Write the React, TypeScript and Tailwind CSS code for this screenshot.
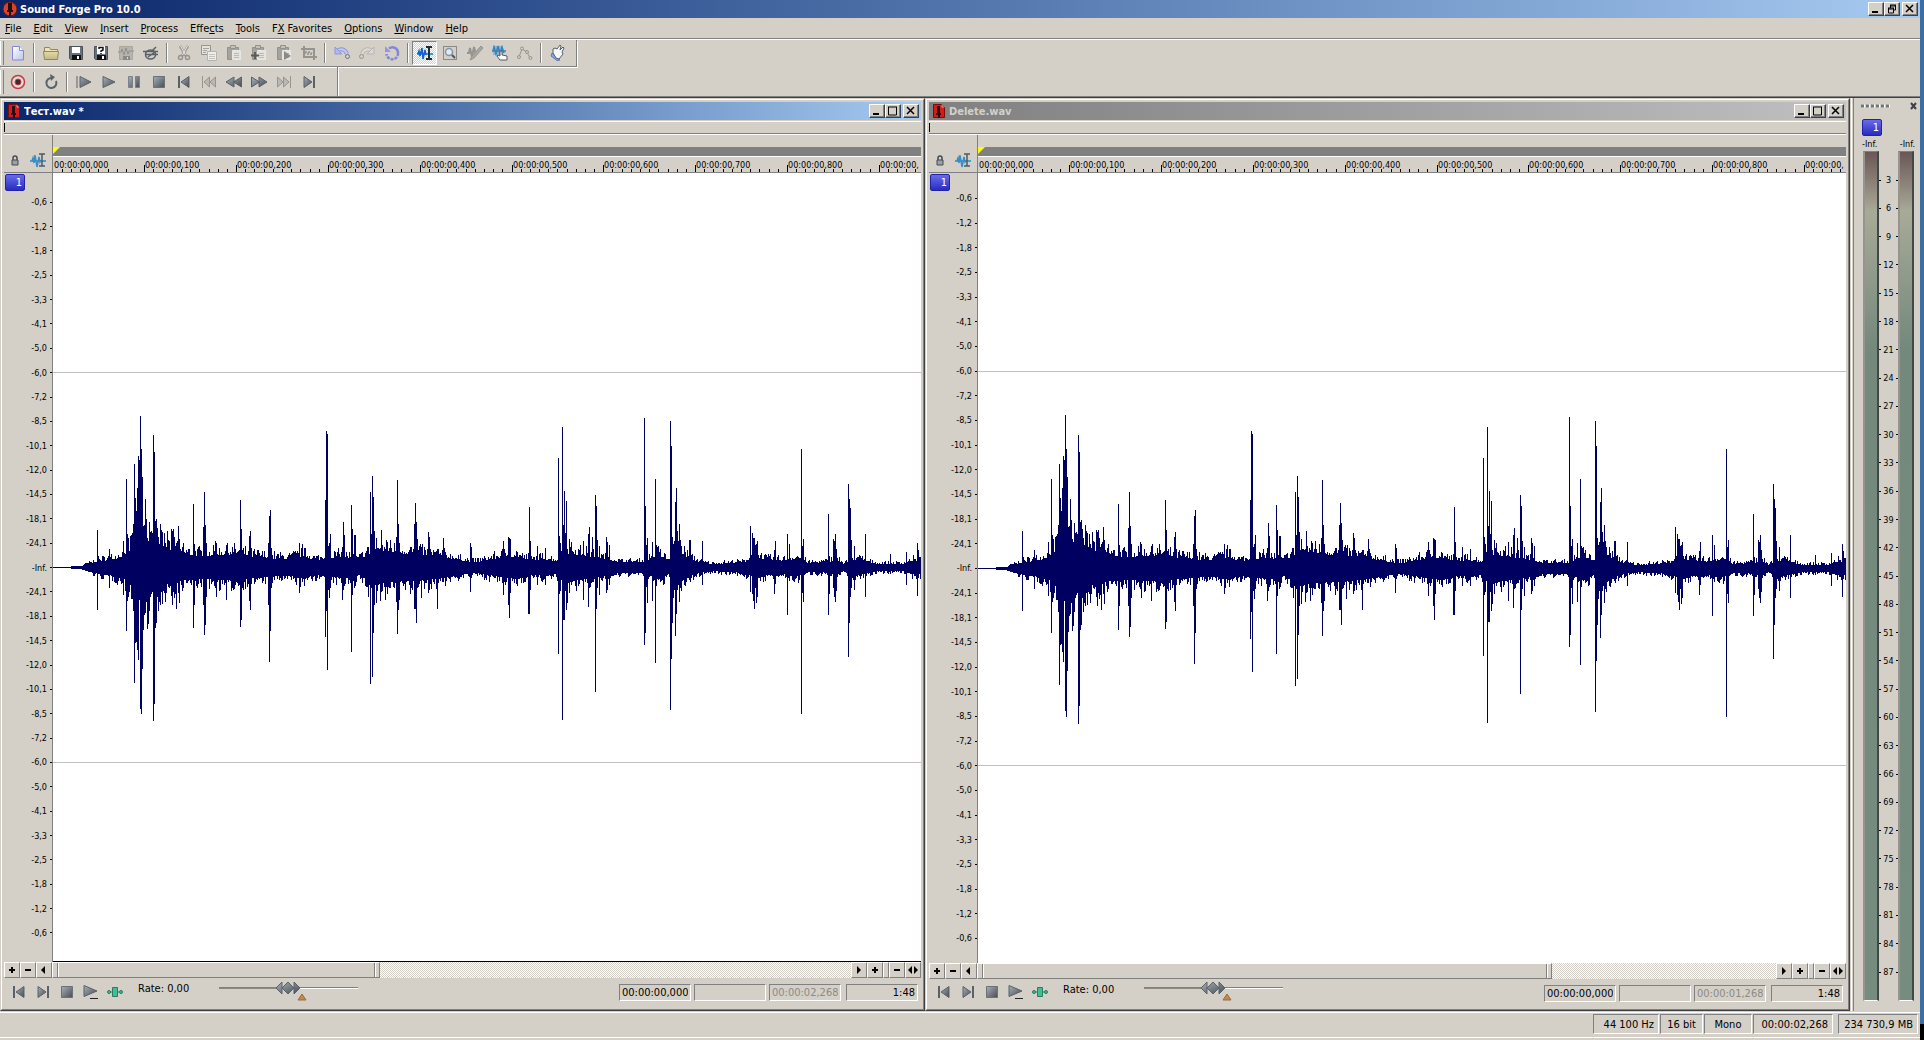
import type { ReactNode } from "react";
import clsx from "clsx";

const MENU = ["_File", "_Edit", "_View", "_Insert", "_Process", "Effe_cts", "_Tools", "F_X Favorites", "_Options", "_Window", "_Help"];

const DB = ["0,6", "1,2", "1,8", "2,5", "3,3", "4,1", "5,0", "6,0", "7,2", "8,5", "10,1", "12,0", "14,5", "18,1", "24,1"];
const SCALE = [...DB, "Inf.", ...[...DB].reverse()];

const WAVE_WIDTH = 868;

// quiet part of the signal: [x, level]
const ENVELOPE = [
  [0, 0], [16, 0], [18, 1], [27, 1], [35, 4], [44, 7], [60, 10], [70, 14], [78, 24], [95, 30], [105, 30], [113, 24],
  [130, 16], [150, 14], [160, 15], [180, 17], [200, 13], [220, 11], [235, 10], [250, 14], [262, 9], [280, 12],
  [290, 13], [305, 9], [320, 20], [335, 19], [355, 17], [375, 15], [390, 13], [405, 9], [420, 6], [435, 9],
  [450, 13], [463, 14], [475, 8], [490, 10], [503, 8], [516, 18], [540, 13], [555, 9], [570, 6], [590, 6],
  [605, 15], [615, 8], [625, 20], [637, 10], [650, 5], [660, 4], [690, 6], [703, 14], [712, 9], [730, 8],
  [745, 11], [755, 5], [775, 6], [783, 10], [790, 4], [803, 10], [815, 6], [825, 4], [850, 4], [860, 8], [868, 8],
];

// clicks: [x, up, down]
const PEAKS = [
  [44, 37, 42], [56, 18, 20], [70, 26, 27], [73, 88, 63], [74, 33, 33], [75, 29, 29], [79, 34, 31], [80, 43, 43],
  [81, 103, 115], [82, 69, 75], [83, 56, 74], [84, 79, 82], [85, 111, 92], [86, 107, 32], [87, 151, 141],
  [88, 118, 146], [89, 90, 101], [90, 41, 62], [91, 42, 47], [92, 68, 45], [93, 48, 34], [94, 29, 61], [95, 26, 56],
  [97, 35, 29], [99, 34, 24], [100, 132, 153], [101, 115, 136], [102, 46, 60], [103, 48, 55], [104, 39, 29],
  [105, 30, 43], [107, 43, 37], [109, 35, 36], [112, 24, 34], [114, 36, 16], [118, 38, 28], [119, 36, 37],
  [120, 38, 24], [123, 24, 41], [125, 41, 25], [126, 28, 35], [130, 24, 20], [140, 63, 60], [141, 23, 37],
  [150, 40, 37], [151, 75, 67], [152, 42, 57], [153, 24, 29], [162, 26, 20], [163, 24, 29], [173, 22, 32],
  [187, 67, 59], [188, 38, 52], [196, 31, 33], [197, 36, 42], [215, 24, 37], [216, 51, 94], [217, 57, 63],
  [218, 19, 20], [246, 24, 25], [249, 23, 14], [272, 67, 69], [273, 136, 43], [274, 133, 102], [275, 21, 22],
  [276, 24, 30], [277, 33, 20], [289, 20, 32], [290, 45, 22], [291, 32, 18], [298, 62, 84], [299, 38, 27],
  [301, 32, 20], [302, 32, 18], [315, 20, 29], [317, 75, 116], [318, 33, 20], [319, 91, 109], [320, 70, 65],
  [321, 36, 37], [323, 29, 35], [327, 19, 33], [328, 37, 24], [332, 18, 32], [334, 25, 26], [337, 27, 20],
  [343, 30, 34], [344, 87, 66], [345, 43, 42], [346, 24, 32], [357, 20, 26], [361, 43, 41], [362, 64, 41],
  [363, 45, 55], [364, 28, 20], [368, 20, 30], [375, 35, 25], [376, 30, 22], [384, 18, 41], [390, 29, 14],
  [417, 24, 24], [418, 20, 10], [450, 26, 27], [455, 30, 37], [456, 29, 50], [457, 28, 25], [475, 14, 46],
  [476, 60, 46], [477, 26, 22], [484, 21, 17], [492, 19, 17], [505, 109, 86], [506, 31, 26], [507, 24, 23],
  [509, 140, 152], [510, 42, 52], [511, 76, 52], [512, 34, 23], [513, 66, 42], [514, 18, 35], [516, 28, 25],
  [518, 25, 17], [530, 26, 32], [535, 33, 39], [536, 40, 20], [539, 30, 14], [542, 72, 124], [543, 61, 41],
  [544, 27, 20], [546, 21, 27], [553, 30, 25], [554, 25, 22], [556, 22, 17], [591, 149, 77], [592, 61, 65],
  [593, 22, 19], [594, 29, 35], [599, 25, 33], [602, 88, 95], [603, 22, 18], [617, 146, 142], [618, 121, 91],
  [619, 30, 55], [620, 23, 30], [621, 26, 22], [622, 65, 68], [623, 79, 46], [624, 36, 22], [626, 43, 34],
  [627, 27, 20], [628, 21, 23], [636, 27, 12], [637, 27, 14], [649, 26, 17], [697, 41, 24], [699, 34, 26],
  [700, 29, 33], [701, 29, 41], [702, 22, 20], [703, 23, 35], [704, 26, 29], [721, 17, 26], [722, 26, 16],
  [734, 33, 47], [736, 23, 13], [748, 118, 146], [749, 21, 25], [750, 28, 34], [775, 53, 47], [776, 11, 26],
  [780, 28, 20], [781, 26, 29], [782, 33, 34], [783, 18, 23], [795, 83, 89], [796, 68, 55], [797, 59, 29],
  [798, 27, 20], [801, 21, 22], [812, 33, 29], [837, 13, 6], [853, 15, 17], [864, 24, 28], [865, 17, 10],
];

function levelAt(x: number) {
  const i = Math.max(1, ENVELOPE.findIndex((p) => p[0] >= x));
  const [x0, a] = ENVELOPE[i - 1];
  const [x1, b] = ENVELOPE[i];
  return a + ((b - a) * (x - x0)) / (x1 - x0);
}

function buildWave() {
  const peaks = new Map(PEAKS.map(([x, up, down]) => [x, [up, down]]));
  let seed = 7;
  const noise = () => {
    seed = (seed * 16807) % 2147483647;
    const r = seed / 2147483647;
    return 0.75 + 0.75 * r * r;
  };
  let d = "";
  for (let x = 0; x < WAVE_WIDTH; x++) {
    const level = levelAt(x);
    const [up, down] = peaks.get(x) ?? [Math.round(level * noise()), Math.round(level * noise())];
    d += `M${x} ${-up}h1V${down + 1}h-1z`;
  }
  return d;
}

const WAVE = buildWave();

function Icon({ children, size = 16 }: { children: ReactNode; size?: number }) {
  return (
    <svg width={size} height={size} viewBox="0 0 16 16" fill="none" aria-hidden="true" className="shrink-0">
      {children}
    </svg>
  );
}

const faded = "#96948f";
const paleFill = "#e4e2dd";

function Clipboard({ children }: { children?: ReactNode }) {
  return (
    <>
      <path d="M1.500 2.500h11v12h-11z" fill="#a5a39e" stroke="#93918c" />
      <path d="M4.500.5h5v3h-5z" fill="#c3c1bc" stroke="#93918c" />
      <path d="M6.500 5.500h8v9h-8z" fill={paleFill} stroke="#e9e7e3" />
      <path d="M8 8.500h5M8 10.500h5M8 12.500h5" stroke="#bcbab5" />
      {children}
    </>
  );
}

function BlueWave() {
  return (
    <>
      <path d="M0 9h16" stroke="#3fa4d4" strokeWidth="2" />
      <path d="M2 9l1-3 1 5 1-8 2 12 2-10 1 5 1-2" stroke="#3b8cc6" strokeWidth="1.5" />
    </>
  );
}

const ICONS: Record<string, ReactNode> = {
  New: (
    <>
      <path d="M2.5 1.500h7l4 4v9.500h-11z" fill="url(#paper)" stroke="#8388d8" />
      <path d="M9.500 1.500v4h4" fill="#fff" stroke="#8388d8" />
    </>
  ),
  Open: (
    <>
      <path d="M1.500 6V2.500h5l1 2h7V7h-13z" fill="#ece6b4" stroke="#8f8856" />
      <path d="M.5 6.500h15l-1 8h-13z" fill="url(#folder)" stroke="#8f8856" />
    </>
  ),
  Save: (
    <>
      <path d="M1.500 1.500h13v13h-12l-1-1z" fill="#69727c" stroke="#48515a" />
      <path d="M4 2h8v6H4z" fill="#fff" />
      <path d="M4 10h9v5H4z" fill="#111" />
      <path d="M9 11h2v3H9z" fill="#fff" />
    </>
  ),
  "Save As": (
    <>
      <path d="M1.500 1.500h13v13h-12l-1-1z" fill="#69727c" stroke="#48515a" />
      <path d="M4 1h8v8H4z" fill="#fff" />
      <path d="M6 4V2.500h4V5L8 6v1M8 8v1" stroke="#111" strokeWidth="1.500" />
      <path d="M4 10h9v5H4z" fill="#111" />
      <path d="M9 11h2v3H9z" fill="#fff" />
    </>
  ),
  "Render As": (
    <>
      <path d="M1.500 1.500h13v13h-13z" fill="#b6b4af" stroke="#a9a7a2" />
      <path d="M0 7h3l1-3 2 6 2-7 2 6 1-3h5" stroke="#92908b" />
      <path d="M5 11h7v4H5z" fill="#8b8984" />
      <path d="M9 12h1v2H9z" fill="#ddd" />
    </>
  ),
  Properties: (
    <>
      <ellipse cx="7.500" cy="9.500" rx="5" ry="4.500" stroke="#596067" strokeWidth="1.500" />
      <path d="M0 6.500h15M2 9.500h13M8 7l5-5M5 12l7-5" stroke="#596067" strokeWidth="1.500" />
    </>
  ),
  Cut: (
    <>
      <path d="M4 1l6 10M12 1L6 11" stroke="#96948f" strokeWidth="2.500" />
      <path d="M4.500 1l5 9M11.500 1l-5 9" stroke="#eceae6" />
      <circle cx="4.500" cy="12.500" r="2" stroke={faded} strokeWidth="1.500" />
      <circle cx="11.500" cy="12.500" r="2" stroke={faded} strokeWidth="1.500" />
    </>
  ),
  Copy: (
    <>
      <path d="M.5.5h9v9h-9z" fill={paleFill} stroke={faded} />
      <path d="M2 3.500h6M2 5.500h4M2 7.500h3" stroke="#a5a39e" />
      <path d="M6.500 6.500h9v9h-9z" fill="#efede9" stroke="#b5b3ae" />
      <path d="M8 9.500h6M8 11.500h6M8 13.500h6" stroke="#c4c2bd" />
    </>
  ),
  Paste: <Clipboard />,
  "Paste Mix": (
    <Clipboard>
      <path d="M4 7v7M0 10.500h8" stroke="#5d5b57" strokeWidth="2" />
    </Clipboard>
  ),
  "Paste to New": (
    <Clipboard>
      <path d="M8 6l7 5-7 4z" fill="#8c8a85" />
    </Clipboard>
  ),
  "Trim/Crop": (
    <>
      <path d="M3 1v11h13M0 4h13v11" stroke="#96948f" strokeWidth="2" />
      <path d="M4 9l1-3 2 4 1-4 2 4 1-3" stroke={faded} />
    </>
  ),
  Undo: (
    <>
      <path d="M3 6c4-3 8-2 10 3" stroke="#8f97d6" strokeWidth="4" />
      <path d="M3 6c4-3 8-2 10 3" stroke="#c3c8f0" strokeWidth="2" />
      <path d="M1 2v7h7z" fill="#b3b9ec" stroke="#8f97d6" />
      <circle cx="13.500" cy="11.500" r="2" fill="#d4d0c8" stroke="#70767c" />
    </>
  ),
  Redo: (
    <>
      <path d="M13 6C9 3 5 4 3 9" stroke="#b7b5b0" strokeWidth="4" />
      <path d="M13 6C9 3 5 4 3 9" stroke="#dedcd7" strokeWidth="2" />
      <path d="M15 2v7H8z" fill="#dcdad5" stroke="#b7b5b0" />
      <circle cx="2.500" cy="11.500" r="2" stroke={faded} />
    </>
  ),
  Repeat: (
    <>
      <path d="M5 3.500A5.500 5.500 0 0 1 14 8" stroke="#8188d6" strokeWidth="2.500" />
      <path d="M14 8A5.500 5.500 0 1 1 2.500 9" stroke="#8188d6" strokeWidth="2.500" strokeDasharray="3 1" />
      <path d="M1 1v6h6z" fill="#9299e0" />
    </>
  ),
  "Edit Tool": (
    <>
      <path d="M0 9h16" stroke="#28a0dc" strokeWidth="2" />
      <path d="M1 9l1-3 1 5 2-8 1 11 2-9 1 5" stroke="#1460c8" strokeWidth="1.500" />
      <path d="M9 2h6M12 2v12M9 14h6" stroke="#222b36" strokeWidth="2" />
    </>
  ),
  "Magnify Tool": (
    <>
      <path d="M1.500 1.500h13v13h-13z" stroke="#444" strokeDasharray="1 1" />
      <circle cx="7" cy="7" r="3.500" fill="#dcecfa" stroke="#8a93a3" strokeWidth="1.500" />
      <path d="M10 10l3 3" stroke="#4d5560" strokeWidth="2" />
    </>
  ),
  "Pencil Tool": (
    <>
      <path d="M0 8h2l1-5 2 9 2-10 2 8" stroke={faded} strokeWidth="2" />
      <path d="M14 1L5 11l-2 4 4-2 9-10z" fill="#a9a7a2" stroke="#96948f" />
    </>
  ),
  "Event Tool": (
    <>
      <path d="M1 1h10v9H1z" fill="#8fb4d2" />
      <path d="M0 6h14M1 6l1-4 2 7 2-8 2 8 2-7 2 6" stroke="#3485bd" strokeWidth="1.500" />
      <path d="M8 15l-3-4 1-1 2 1V6h2v4l5 1v4z" fill="#fff" stroke="#565b62" />
    </>
  ),
  "Envelope Tool": (
    <>
      <path d="M2 12L5 4l5 3 3 6" stroke={faded} />
      <circle cx="2" cy="12" r="1.500" fill="#d4d0c8" stroke={faded} />
      <circle cx="5" cy="3.500" r="1.500" fill="#d4d0c8" stroke={faded} />
      <circle cx="10" cy="7" r="1.500" fill="#d4d0c8" stroke={faded} />
      <circle cx="13.500" cy="13" r="1.500" fill="#d4d0c8" stroke={faded} />
    </>
  ),
  "What's This": (
    <>
      <path d="M2 8l8 7-3 .5L1 11z" fill="#87a7df" stroke="#5d79b4" />
      <path d="M3 8V4l2-1 2 1 3-4 1 1-1 4 3-3 1 1-2 4 1 2-4 5-3-1z" fill="#f4f6fa" stroke="#555f6e" />
    </>
  ),
  Record: (
    <>
      <circle cx="8" cy="8" r="6.500" fill="#e9dcd8" stroke="#c43c44" strokeWidth="1.500" />
      <circle cx="8" cy="8" r="3" fill="#3d2a30" stroke="#c43c44" />
    </>
  ),
  "Loop Playback": (
    <>
      <path d="M9 4A5 5 0 1 0 13 7" stroke="#5c6269" strokeWidth="2" />
      <path d="M7 0l5 3-4 4z" fill="#5c6269" />
    </>
  ),
  "Play All": <path d="M1 2v12M4 2.500v11l11-5.500z" fill="url(#steel)" stroke="#5a6169" />,
  Play: <path d="M2 2.500v11l12-5.500z" fill="url(#steel)" stroke="#5a6169" />,
  Pause: <path d="M2.500 2.500h4v11h-4zM9.500 2.500h4v11h-4z" fill="url(#steel)" stroke="#7a8189" />,
  Stop: <path d="M2.500 2.500h11v11h-11z" fill="url(#steel)" stroke="#6a7179" />,
  "Go to Start": (
    <>
      <path d="M3 2v12" stroke="#5a6169" strokeWidth="2" />
      <path d="M13 2.500v11L5 8z" fill="url(#steel)" stroke="#5a6169" />
    </>
  ),
  Previous: <path d="M1.500 2v12M8.500 3v10L3 8zM14.500 3v10L9 8z" fill="#bab8b3" stroke={faded} />,
  Rewind: <path d="M8 3v10L0 8zM15.500 3v10l-8-5z" fill="url(#steel)" stroke="#5a6169" />,
  Forward: <path d="M8 3v10l8-5zM.5 3v10l8-5z" fill="url(#steel)" stroke="#5a6169" />,
  Next: <path d="M14.500 2v12M7.500 3v10L13 8zM1.500 3v10L7 8z" fill="#bab8b3" stroke={faded} />,
  "Go to End": (
    <>
      <path d="M13 2v12" stroke="#5a6169" strokeWidth="2" />
      <path d="M3 2.500v11L11 8z" fill="url(#steel)" stroke="#5a6169" />
    </>
  ),
  "Play Normal": (
    <>
      <path d="M1 1.500v11L14 7z" fill="url(#steel)" stroke="#5a6169" />
      <path d="M7 14.500h8" stroke="#222" />
    </>
  ),
  Scrub: (
    <>
      <path d="M2 8h12" stroke="#2c7a62" />
      <circle cx="2" cy="8" r="1.500" fill="#3fbf93" stroke="#2c7a62" />
      <circle cx="14" cy="8" r="1.500" fill="#3fbf93" stroke="#2c7a62" />
      <path d="M5.500 3.500h5v9h-5z" fill="#3fbf93" stroke="#2c7a62" />
    </>
  ),
};

const STANDARD = [
  ["New"],
  ["Open", "Save", "Save As", "Render As", "Properties"],
  ["Cut", "Copy", "Paste", "Paste Mix", "Paste to New", "Trim/Crop"],
  ["Undo", "Redo", "Repeat"],
  ["Edit Tool", "Magnify Tool", "Pencil Tool", "Event Tool", "Envelope Tool"],
  ["What's This"],
];

const TRANSPORT = [
  ["Record"],
  ["Loop Playback"],
  ["Play All", "Play", "Pause", "Stop", "Go to Start", "Previous", "Rewind", "Forward", "Next", "Go to End"],
];

function Toolbar({ groups, label, active }: { groups: string[][]; label: string; active?: string }) {
  return (
    <div role="toolbar" aria-label={label} className="flex h-full items-center pr-1">
      <div className="mr-px h-6 w-1 border-r border-r-[#808080] border-l border-l-white" />
      {groups.map((group, i) => (
        <div key={group[0]} className="flex items-center">
          {i > 0 && (
            <div className="flex w-2 justify-center">
              <div className="h-5 w-[2px] border-r border-r-white bg-[#808080]" />
            </div>
          )}
          {group.map((name) => (
            <button
              key={name}
              type="button"
              aria-label={name}
              className={clsx(
                "flex h-6 w-[25px] items-center justify-center",
                name === active &&
                  "border border-t-[#808080] border-r-white border-b-white border-l-[#808080] bg-[conic-gradient(#fff_25%,#d4d0c8_0_50%,#fff_0_75%,#d4d0c8_0)] bg-[length:2px_2px]",
              )}
            >
              <Icon>{ICONS[name]}</Icon>
            </button>
          ))}
        </div>
      ))}
    </div>
  );
}

function CaptionButtons({ restore }: { restore?: boolean }) {
  const cls =
    "flex h-[14px] w-4 items-center justify-center border border-t-white border-r-[#404040] border-b-[#404040] border-l-white bg-[#d4d0c8] shadow-[inset_-1px_-1px_0_#808080]";
  return (
    <div className="mr-[2px] flex items-center">
      <button type="button" aria-label="Minimize" className={cls}>
        <svg width="10" height="10" aria-hidden="true">
          <path d="M1 7h6v2H1z" />
        </svg>
      </button>
      <button type="button" aria-label={restore ? "Restore" : "Maximize"} className={cls}>
        <svg width="10" height="10" fill="none" stroke="#000" aria-hidden="true">
          {restore ? (
            <path d="M3 1h6M3.500 1v3M3 2h6M8.500 1v5H7M1 4h6M1.500 4v5h5V4M1 5h6" />
          ) : (
            <path d="M.5 1v8h8V1M0 1h9" strokeWidth="1" />
          )}
        </svg>
      </button>
      <button type="button" aria-label="Close" className={clsx(cls, "ml-[2px]")}>
        <svg width="10" height="10" stroke="#000" strokeWidth="1.500" aria-hidden="true">
          <path d="M1 1l7 7M8 1L1 8" />
        </svg>
      </button>
    </div>
  );
}

function ChannelButton({ className }: { className?: string }) {
  return (
    <button
      type="button"
      aria-label="Channel 1"
      className={clsx(
        "h-[17px] w-5 shrink-0 rounded-[2px] border border-[#2222a8] bg-linear-to-b from-[#6a6ae8] to-[#2a2ac0] pr-[2px] text-right text-[11px] leading-[15px] text-white",
        className,
      )}
    >
      1
    </button>
  );
}

function Ruler() {
  const ticks = Array.from({ length: 94 }, (_, i) => i + 1);
  return (
    <svg className="block h-4 w-full" aria-label="Time ruler">
      <path d="M0 15.500h3000" stroke="#808080" />
      {ticks.map((i) => (
        <rect key={i} x={Math.floor(i * 9.18)} y={i % 10 ? 12 : 8} width="1" height={i % 10 ? 3 : 7} />
      ))}
      {Array.from({ length: 10 }, (_, i) => (
        <text key={i} x={Math.floor(i * 91.8) + 1} y="11" fontSize="9">
          {i < 9 ? `00:00:00,${i}00` : "00:00:00,"}
        </text>
      ))}
    </svg>
  );
}

function ScrollButton({ label, d }: { label: string; d: string }) {
  return (
    <button
      type="button"
      aria-label={label}
      className="flex h-4 w-4 shrink-0 items-center justify-center border border-t-white border-r-[#808080] border-b-[#808080] border-l-white"
    >
      <svg width="10" height="10" aria-hidden="true">
        <path d={d} />
      </svg>
    </button>
  );
}

const PLUS = "M4 2h2v2h2v2H6v2H4V6H2V4h2z";
const MINUS = "M2 4h6v2H2z";

function Field({ label, value, dim, right }: { label: string; value: string; dim?: boolean; right?: boolean }) {
  return (
    <input
      readOnly
      aria-label={label}
      value={value}
      className={clsx(
        "h-[17px] w-[72px] border border-t-[#808080] border-r-white border-b-white border-l-[#808080] bg-transparent px-[2px] text-[11px] outline-none",
        dim && "text-[#8c8984]",
        right && "text-right",
      )}
    />
  );
}

type SoundWindowProps = {
  title: string;
  active?: boolean;
  length: string;
  half: number;
  gain: number;
};

function SoundWindow({ title, active, length, half, gain }: SoundWindowProps) {
  return (
    <section
      aria-label={title}
      className="flex min-w-0 flex-col border border-t-[#d4d0c8] border-r-[#404040] border-b-[#404040] border-l-[#d4d0c8]"
    >
      <div className="flex min-h-0 flex-1 flex-col border border-t-white border-r-[#808080] border-b-[#808080] border-l-white p-[2px]">
        <header
          className={clsx(
            "flex h-[18px] shrink-0 items-center bg-linear-to-r font-bold",
            active ? "from-[#0a246a] to-[#a6caf0] text-white" : "from-[#808080] to-[#c0c0c0] text-[#d4d0c8]",
          )}
        >
          <svg width="16" height="16" className="mx-[2px]" aria-hidden="true">
            <path d="M2.500 1.500h8l3 3v10h-11z" fill="#d21c1c" stroke="#7d0b0b" />
            <path d="M10.500 1.500v3h3" fill="#f08a80" />
            <path d="M6 3h3v7H6zM5 10h5v2H5zM7 12h2v3H7z" fill="#2a0e0e" />
          </svg>
          <h2 className="flex-1 truncate">{title}</h2>
          <CaptionButtons />
        </header>

        <div className="mt-px flex h-[13px] shrink-0 items-center border-t border-b border-t-white border-b-[#808080]">
          <div className="h-[9px] w-px bg-black" />
        </div>

        <div className="flex h-[39px] shrink-0 border-t border-white">
          <div className="flex w-[49px] shrink-0 items-end border-r border-b border-[#808080] pb-1 pl-[5px]">
            <svg width="12" height="14" fill="none" aria-label="Lock loop">
              <path d="M4 6V4a2 2 0 0 1 4 0v2" stroke="#444b52" strokeWidth="1.500" />
              <path d="M3 6h6v5H3z" fill="#9aa1a8" stroke="#444b52" />
            </svg>
            <div className="ml-[9px]">
              <Icon>
                <BlueWave />
                <path d="M9 2h6M12 2v12M9 14h6" stroke="#4d5a66" strokeWidth="1.500" />
              </Icon>
            </div>
          </div>
          <div className="flex min-w-0 flex-1 flex-col">
            <div className="h-3" />
            <div className="h-[9px] bg-[#808080]">
              <svg width="7" height="7" className="block" aria-hidden="true">
                <path d="M0 0h7L0 7z" fill="#ff0" />
              </svg>
            </div>
            <div className="h-px bg-white" />
            <Ruler />
          </div>
        </div>

        <div className="flex min-h-0 flex-1">
          <div className="flex w-[49px] shrink-0 border-r border-[#808080]">
            <ChannelButton className="mt-px ml-px" />
            <div className={clsx("flex flex-1 flex-col text-[9px] leading-3", active ? "py-[17px]" : "pt-[13px] pb-3")}>
              {SCALE.map((db, i) => (
                <div key={i} className="flex flex-1 items-center justify-end gap-[3px]">
                  <span>-{db}</span>
                  <i className="h-px w-[2px] bg-black" />
                </div>
              ))}
            </div>
          </div>
          <div className={clsx("min-w-0 flex-1 overflow-hidden bg-white", active && "border-b border-black")}>
            <svg
              className="block h-full w-full"
              viewBox={`0 ${-half} ${WAVE_WIDTH} ${half * 2}`}
              preserveAspectRatio="none"
              shapeRendering="crispEdges"
              role="img"
              aria-label={`Waveform of ${title}`}
            >
              <path d={`M0 ${-gain}h${WAVE_WIDTH}v1H0zM0 ${gain}h${WAVE_WIDTH}v1H0z`} fill="#c0c0c0" />
              <path d={WAVE} fill="#000060" transform={`scale(1 ${gain / 195})`} />
            </svg>
          </div>
        </div>

        <div className="flex h-4 shrink-0">
          <ScrollButton label="Zoom in amplitude" d={PLUS} />
          <ScrollButton label="Zoom out amplitude" d={MINUS} />
          <ScrollButton label="Scroll left" d="M6 1v8L2 5z" />
          <div className="min-w-0 flex-1 bg-[conic-gradient(#fff_25%,#d4d0c8_0_50%,#fff_0_75%,#d4d0c8_0)] bg-[length:2px_2px]">
            <div
              className={clsx(
                "flex h-full border border-t-white border-r-[#808080] border-b-[#808080] border-l-white bg-[#d4d0c8] px-1",
                active ? "w-[41%]" : "w-[72%]",
              )}
            >
              <div className="flex-1 border-x border-[#808080] shadow-[inset_1px_0_0_#fff,1px_0_0_#fff]" />
            </div>
          </div>
          <ScrollButton label="Scroll right" d="M3 1v8l4-4z" />
          <ScrollButton label="Zoom in time" d={PLUS} />
          <div className="w-[6px] border border-t-white border-r-[#808080] border-b-[#808080] border-l-white" />
          <ScrollButton label="Zoom out time" d={MINUS} />
          <ScrollButton label="Zoom selection" d="M4 1v8L0 5zM6 1v8l4-4z" />
        </div>

        <div className={clsx("flex shrink-0 items-center", active ? "h-[29px]" : "h-7")}>
          <div className="flex pb-[2px] pl-[3px]">
            {["Go to Start", "Go to End", "Stop", "Play Normal", "Scrub"].map((name) => (
              <button key={name} type="button" aria-label={name} className="flex h-6 w-6 items-center justify-center">
                <Icon>{ICONS[name]}</Icon>
              </button>
            ))}
          </div>
          <label className="flex items-center pb-1">
            <span className="w-[92px] pb-1 pl-[11px] whitespace-nowrap">Rate: 0,00</span>
            <span className="relative block h-5 w-[140px]">
              <svg width="140" height="20" className="block" aria-hidden="true">
                <path d="M0 6h139v1H0z" fill="#808080" />
                <path d="M0 7h60v1H0z" fill="#8d8b80" />
                <path d="M60 7h79v1H60z" fill="#fff" />
                <path d="M63 1v12l-6-6zM69 1l6 6-6 6-6-6zM75 1v12l6-6z" fill="url(#steel)" stroke="#5a6169" />
                <path d="M83 13l4 6h-8z" fill="#c08a4c" stroke="#9c6a3a" />
              </svg>
              <input
                type="range"
                aria-label="Play rate"
                defaultValue={50}
                className="absolute inset-0 m-0 h-full w-full opacity-0"
              />
            </span>
          </label>
          <div className="ml-auto flex gap-[3px] pr-[3px]">
            <Field label="Selection start" value="00:00:00,000" />
            <Field label="Selection end" value="" />
            <Field label="Selection length" value={length} dim />
            <div className="pl-[2px]">
              <Field label="Zoom ratio" value="1:48" right />
            </div>
          </div>
        </div>
      </div>
    </section>
  );
}

function MeterBar() {
  return (
    <div className="w-4 border-t border-l-2 border-t-[#808080] border-r-2 border-b border-l-[#959490] border-r-[#404848] border-b-white bg-[linear-gradient(#6b5656_0%,#a8aa97_7%,#74897c_23%,#758c7f_100%)]" />
  );
}

function ChannelMeters() {
  const marks = Array.from({ length: 29 }, (_, i) => (i + 1) * 3);
  return (
    <aside aria-label="Channel meters" className="flex w-[70px] shrink-0 border-l border-[#d4d0c8]">
      <div className="w-[3px] border-r border-l border-r-[#808080] border-l-white" />
      <div className="flex flex-1 flex-col pb-[10px] text-[9px]">
        <div className="flex h-[21px] shrink-0 items-center justify-between pr-[2px] pb-[6px] pl-[7px]">
          <svg width="29" height="4" aria-hidden="true">
            <path d="M1 2h29" stroke="#fff" strokeWidth="3" strokeDasharray="3 2" />
            <path d="M0 2h29" stroke="#70757c" strokeWidth="3" strokeDasharray="3 2" />
          </svg>
          <button type="button" aria-label="Close meters" className="h-2 w-2">
            <svg width="8" height="8" stroke="#3c3f44" strokeWidth="2" className="block" aria-hidden="true">
              <path d="M1 1l5 6M6 1L1 7" />
            </svg>
          </button>
        </div>
        <ChannelButton className="ml-2" />
        <div className="flex h-[15px] shrink-0 items-center justify-between pt-[2px] pr-[5px] pl-2">
          <span>-Inf.</span>
          <span>-Inf.</span>
        </div>
        <div className="flex min-h-0 flex-1 pl-[9px]">
          <MeterBar />
          <div className="flex w-[19px] flex-col py-[15px] leading-3">
            {marks.map((mark) => (
              <div key={mark} className="flex flex-1 items-center justify-between">
                <i className="h-px w-[2px] bg-black" />
                <span>{mark}</span>
                <i className="h-px w-[2px] bg-black" />
              </div>
            ))}
          </div>
          <MeterBar />
        </div>
      </div>
    </aside>
  );
}

function StatusCell({ children, className }: { children: ReactNode; className: string }) {
  return (
    <div
      className={clsx(
        "h-5 border border-t-[#808080] border-r-white border-b-white border-l-[#808080] text-[11px] leading-[19px] whitespace-nowrap",
        className,
      )}
    >
      {children}
    </div>
  );
}

export default function App() {
  return (
    <div className="flex h-screen cursor-default bg-[#d4d0c8] font-['DejaVu_Sans_Condensed','DejaVu_Sans',sans-serif] text-[11px] leading-[13px] text-black">
      <svg className="absolute h-0 w-0" aria-hidden="true">
        <defs>
          <linearGradient id="steel" x1="0" y1="0" x2="1" y2="1">
            <stop offset="0" stopColor="#a9b0b8" />
            <stop offset="1" stopColor="#454c54" />
          </linearGradient>
          <linearGradient id="paper" x1="0" y1="0" x2="1" y2="1">
            <stop offset="0" stopColor="#fff" />
            <stop offset="1" stopColor="#b9c6e6" />
          </linearGradient>
          <linearGradient id="folder" x1="0" y1="0" x2="0" y2="1">
            <stop offset="0" stopColor="#e2dbab" />
            <stop offset="1" stopColor="#c2b783" />
          </linearGradient>
        </defs>
      </svg>

      <div className="flex min-w-0 flex-1 flex-col">
        <header className="flex h-[18px] shrink-0 items-center bg-linear-to-r from-[#0a246a] to-[#a6caf0] font-bold text-white">
          <svg width="16" height="16" className="mr-[2px] ml-[2px]" aria-hidden="true">
            <circle cx="8" cy="8" r="7" fill="#d8412c" stroke="#5a1a14" />
            <path d="M6 2h4v7H6zM5 9h6v2H5zM7 11h2v4H7z" fill="#1d1212" />
          </svg>
          <h1 className="flex-1">Sound Forge Pro 10.0</h1>
          <CaptionButtons restore />
        </header>

        <nav className="flex h-5 shrink-0 items-center gap-[2px]">
          {MENU.map((item) => {
            const [before, rest] = item.split("_");
            return (
              <button key={item} type="button" className="px-[5px] whitespace-nowrap">
                {before}
                <u>{rest[0]}</u>
                {rest.slice(1)}
              </button>
            );
          })}
        </nav>

        <div className="shrink-0 border-t border-b border-t-[#808080] border-b-[#404040]">
          <div className="flex h-[28px] border-t border-white">
            <div className="border-r border-b border-[#808080] pr-[2px] shadow-[1px_1px_0_#fff]">
              <Toolbar groups={STANDARD} label="Standard" active="Edit Tool" />
            </div>
          </div>
          <div className="flex h-[30px] border-b border-[#808080]">
            <div className="border-r border-[#808080] pr-3 shadow-[1px_0_0_#fff]">
              <Toolbar groups={TRANSPORT} label="Transport" />
            </div>
          </div>
        </div>

        <div className="flex min-h-0 flex-1">
          <main className="grid min-w-0 flex-1 grid-cols-2">
            <SoundWindow title="Тест.wav *" active length="00:00:02,268" half={394} gain={195} />
            <SoundWindow title="Delete.wav" length="00:00:01,268" half={395} gain={197} />
          </main>
          <ChannelMeters />
        </div>

        <footer className="mt-px shrink-0 border-t border-white pt-px">
          <div className="flex justify-end gap-px border-b border-white pr-[2px] pb-[3px]">
            <StatusCell className="w-[66px] pr-1 text-right">44 100 Hz</StatusCell>
            <StatusCell className="w-[43px] text-center">16 bit</StatusCell>
            <StatusCell className="w-12 text-center">Mono</StatusCell>
            <StatusCell className="w-20 pr-1 text-right">00:00:02,268</StatusCell>
            <StatusCell className="ml-1 w-20 pr-1 text-right">234 730,9 MB</StatusCell>
          </div>
          <div className="h-[2px]" />
        </footer>
      </div>

      <div className="flex w-1 shrink-0 flex-col bg-black pb-4">
        <div className="flex-1 bg-[#3a6ea5]" />
      </div>
    </div>
  );
}
